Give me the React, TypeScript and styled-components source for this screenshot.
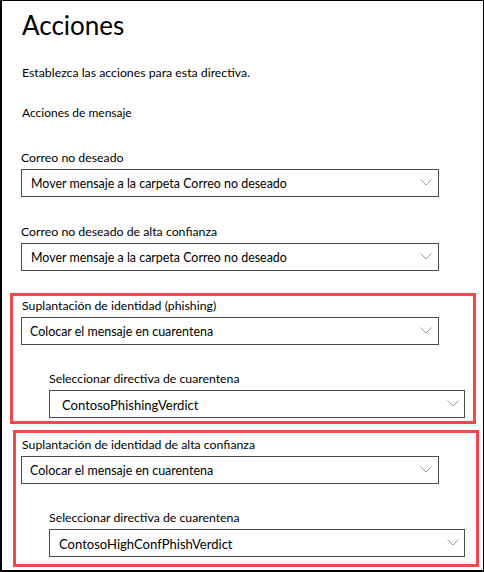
import React from "react";
import styled, { createGlobalStyle } from "styled-components";

const Global = createGlobalStyle`
  html, body { margin: 0; padding: 0; background: #fff; }
  body { font-family: Lato, "Liberation Sans", Arial, sans-serif; color: #000; }
  * { box-sizing: border-box; }
`;

const Frame = styled.div`
  width: 484px;
  height: 572px;
  border-top: 1px solid #000;
  border-left: 2px solid #000;
  border-right: 1px solid #000;
  border-bottom: 2px solid #000;
  padding: 0 0 0 19px;
  display: flex;
  flex-direction: column;
  overflow: hidden;
`;

const Title = styled.h1`
  margin: 8px 0 0 1px;
  font-size: 26px;
  font-weight: 400;
  line-height: 32px;
`;

const Description = styled.p`
  margin: 24px 0 0 1px;
  font-size: 12.3px;
  line-height: 16px;
`;

const SectionLabel = styled.div`
  margin: 24px 0 0 1px;
  font-size: 12px;
  line-height: 16px;
`;

const Field = styled.div<{ $top: number; $indent?: number }>`
  display: flex;
  flex-direction: column;
  margin-top: ${(p) => p.$top}px;
  margin-left: ${(p) => p.$indent ?? 0}px;
`;

const Label = styled.label<{ $shift?: number }>`
  font-size: 12.3px;
  line-height: 16px;
  margin: 0 0 3px ${(p) => p.$shift ?? 0}px;
  white-space: nowrap;
`;

const Select = styled.div<{ $width: number; $pad: number; $size: number; $right: number }>`
  width: ${(p) => p.$width}px;
  height: 28px;
  border: 1px solid #4a4a4a;
  display: flex;
  align-items: center;
  justify-content: space-between;
  padding: 1px ${(p) => p.$right}px 0 ${(p) => p.$pad}px;
  font-size: ${(p) => p.$size}px;
  color: #000;
  white-space: nowrap;
`;

const Chevron = styled.svg`
  width: 12px;
  height: 7px;
  flex: none;
  margin-bottom: 2px;
`;

const Highlight = styled.div<{ $shift: number; $top: number; $padTop: number; $padBottom: number }>`
  margin-top: ${(p) => p.$top}px;
  margin-left: ${(p) => -11 + p.$shift}px;
  width: 466px;
  border: 3px solid #f04848;
  padding: ${(p) => p.$padTop}px 0 ${(p) => p.$padBottom}px ${(p) => 8 - p.$shift}px;
  display: flex;
  flex-direction: column;
`;

const Arrow = () => (
  <Chevron viewBox="0 0 12 7">
    <path d="M0.5 0.5 L6 6 L11.5 0.5" fill="none" stroke="#9a9a9a" strokeWidth="1" />
  </Chevron>
);

type Opt = { label: string; value: string; pad?: number; labelShift?: number };

const Dropdown: React.FC<{ opt: Opt; top: number; nested?: boolean }> = ({ opt, top, nested }) => (
  <Field $top={top} $indent={nested ? 28 : 0}>
    <Label $shift={opt.labelShift}>{opt.label}</Label>
    <Select
      $width={nested ? 416 : 418}
      $pad={opt.pad ?? 9}
      $right={nested ? 5 : 6}
      $size={nested ? 13.05 : 12.45}
    >
      <span>{opt.value}</span>
      <Arrow />
    </Select>
  </Field>
);

export default function App() {
  return (
    <>
      <Global />
      <Frame>
        <Title>Acciones</Title>
        <Description>Establezca las acciones para esta directiva.</Description>
        <SectionLabel>Acciones de mensaje</SectionLabel>
        <Dropdown
          top={29}
          opt={{ label: "Correo no deseado", value: "Mover mensaje a la carpeta Correo no deseado" }}
        />
        <Dropdown
          top={27}
          opt={{ label: "Correo no deseado de alta confianza", value: "Mover mensaje a la carpeta Correo no deseado" }}
        />
        <Highlight $shift={0} $top={22} $padTop={2} $padBottom={3}>
          <Dropdown
            top={0}
            opt={{ label: "Suplantación de identidad (phishing)", value: "Colocar el mensaje en cuarentena", pad: 8, labelShift: 1 }}
          />
          <Dropdown
            top={26}
            nested
            opt={{ label: "Seleccionar directiva de cuarentena", value: "ContosoPhishingVerdict", pad: 12 }}
          />
        </Highlight>
        <Highlight $shift={3} $top={6} $padTop={4} $padBottom={7}>
          <Dropdown
            top={0}
            opt={{ label: "Suplantación de identidad de alta confianza", value: "Colocar el mensaje en cuarentena", pad: 8, labelShift: 1 }}
          />
          <Dropdown
            top={26}
            nested
            opt={{ label: "Seleccionar directiva de cuarentena", value: "ContosoHighConfPhishVerdict", pad: 9 }}
          />
        </Highlight>
      </Frame>
    </>
  );
}
